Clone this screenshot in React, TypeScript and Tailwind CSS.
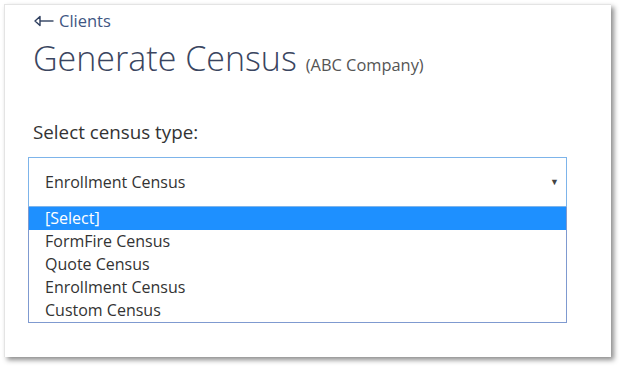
import { useState } from 'react'

const options = ['[Select]', 'FormFire Census', 'Quote Census', 'Enrollment Census', 'Custom Census']

function BackArrow() {
  return (
    <svg width="20" height="12" viewBox="0 0 20 12" fill="none" stroke="#2f3f5f" strokeWidth="1.4">
      <path d="M1 6 L6 1.5 L6 10.5 Z" strokeLinejoin="round" />
      <path d="M6 6 H19.5" />
    </svg>
  )
}

export default function App() {
  const [value] = useState('Enrollment Census')

  return (
    <div className="w-[620px] h-[368px] bg-white pt-[4px] pl-[4px]" style={{ fontFamily: '"Open Sans", sans-serif' }}>
      <div className="w-[607px] h-[353px] bg-white border-l border-t border-[#e4e4e4] shadow-[3px_3px_5px_rgba(0,0,0,0.45)] pl-[23px] pr-[40px] pt-[6px]">
        {/* Back link */}
        <a className="flex items-center gap-[5px] text-[16.5px] text-[#3f5683] leading-[20px] ml-[6px]">
          <BackArrow />
          Clients
        </a>

        {/* Title */}
        <h1 className="flex items-baseline gap-[9px] ml-[5px] mt-[5px]">
          <span className="text-[34px] font-light text-[#3a4560] leading-[44px]">Generate Census</span>
          <span className="text-[16.4px] text-[#555]">(ABC Company)</span>
        </h1>

        <div className="text-[18.8px] text-[#333] mt-[40px] ml-[5px] leading-[24px]">Select census type:</div>

        {/* Select with open list */}
        <div className="mt-[13px] w-[539px]">
          <div className="h-[50px] border border-[#7db4ea] flex items-center justify-between pl-[16px] pr-[7px] text-[16px] text-[#333]">
            <span>{value}</span>
            <span className="text-[9px] text-[#444]">▼</span>
          </div>
          <div className="border border-[#7f9ad0] border-t-0">
            {options.map((o, i) => (
              <div
                key={o}
                className={
                  i === 0
                    ? 'h-[23px] leading-[23px] pl-[16px] text-[16px] bg-[#1e90ff] text-white'
                    : 'h-[23px] leading-[23px] pl-[16px] text-[16px] text-[#333]'
                }
              >
                {o}
              </div>
            ))}
          </div>
        </div>
      </div>
    </div>
  )
}
